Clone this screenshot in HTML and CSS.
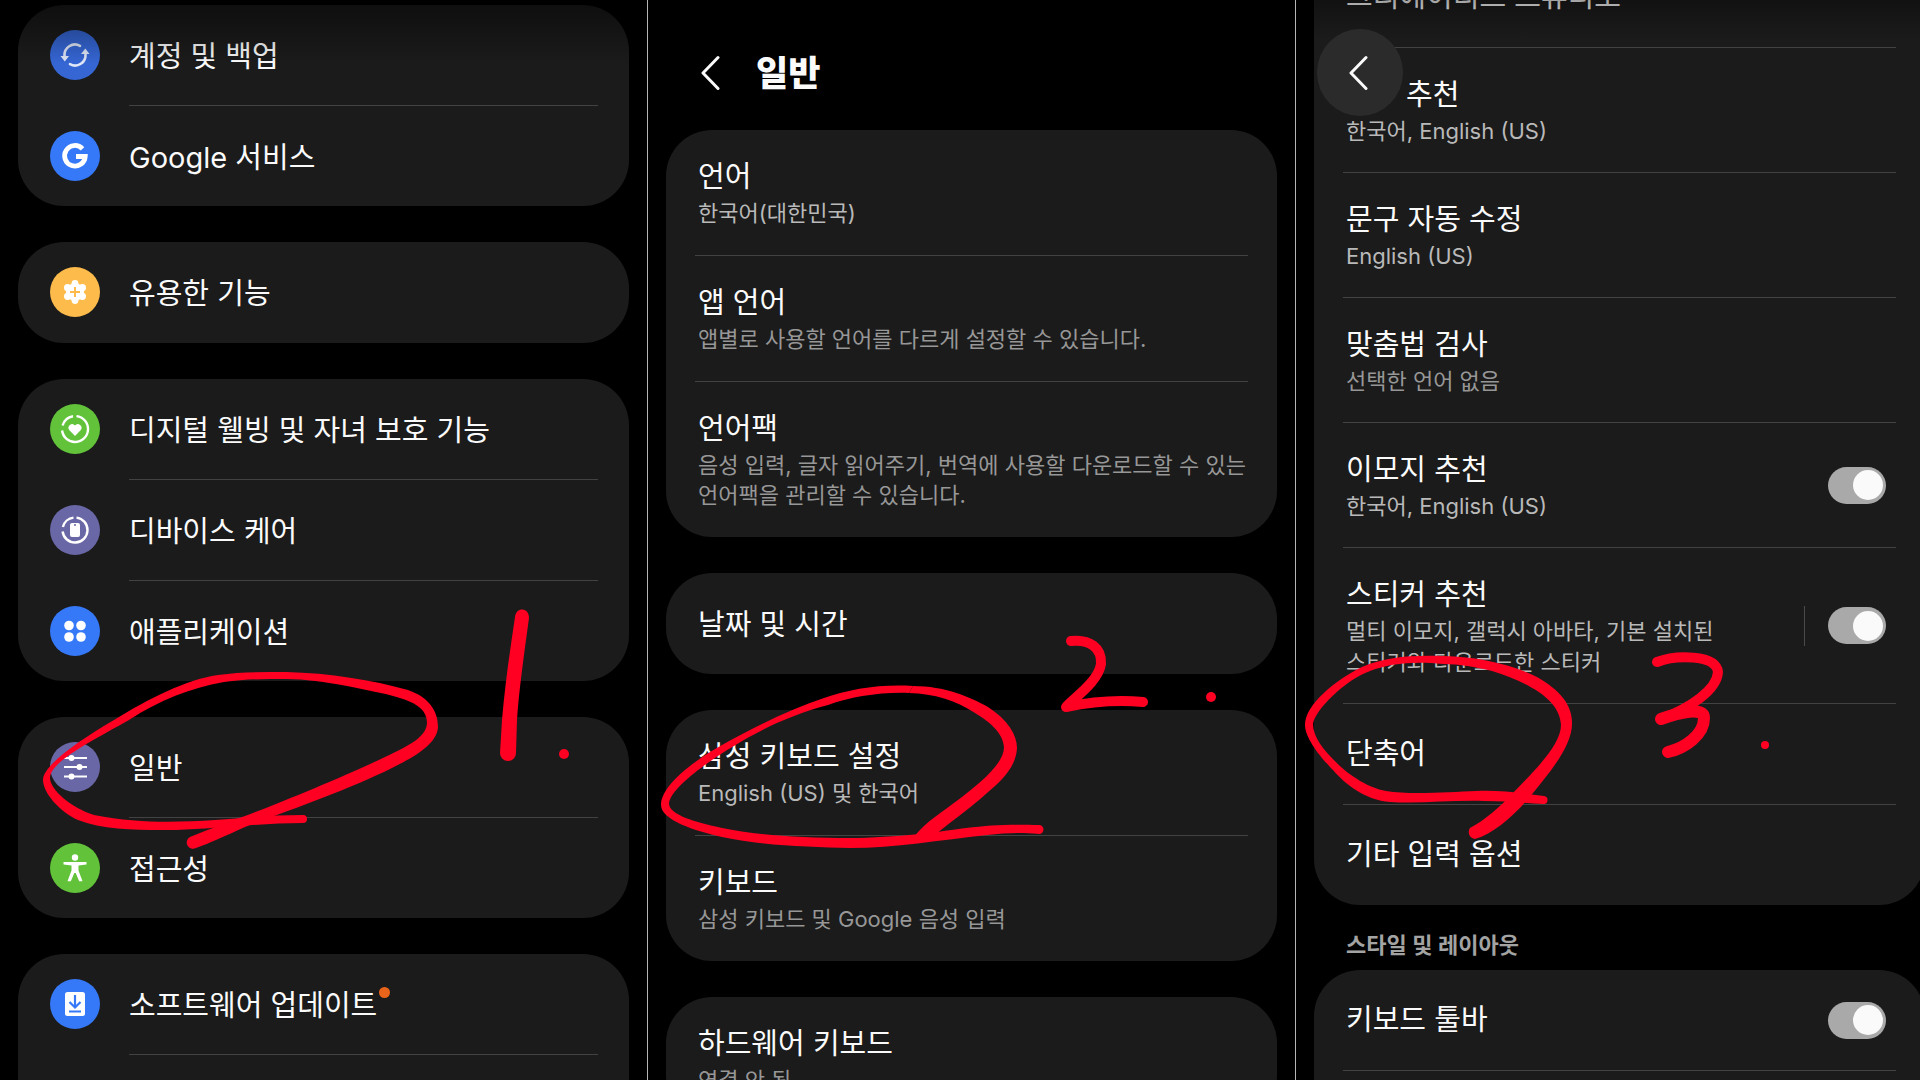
FILE: index.html
```html
<!DOCTYPE html>
<html lang="ko">
<head>
<meta charset="utf-8">
<meta name="viewport" content="width=device-width, initial-scale=1">
<title>단축어 설정 방법</title>
<link rel="stylesheet" href="styles.css">
</head>
<body>
<main class="guide">
  <section class="screen screen--menu" aria-label="설정">
    <ul class="card">
      <li class="item"><a class="row" href="#">
        <svg class="icon" viewBox="0 0 50 50" aria-hidden="true"><circle cx="25" cy="25" r="25" fill="#3566d4"/><g fill="none" stroke="#dfe7f8" stroke-width="2.6" stroke-linecap="round"><path d="M14.500 26A10.500 10.500 0 0 1 30 15.800"/><path d="M35.500 24A10.500 10.500 0 0 1 20 34.200"/></g><path d="M10.500 26h8.500l-4.200 5.500zM31 24h8.500l-4.200-5.500z" fill="#dfe7f8"/></svg>
        <span class="title">계정 및 백업</span></a></li>
      <li class="item"><a class="row" href="#">
        <svg class="icon" viewBox="0 0 50 50" aria-hidden="true"><circle cx="25" cy="25" r="25" fill="#3579f8"/><path d="M32.500 17.800A10.300 10.300 0 1 0 35.200 25.500H26" fill="none" stroke="#fff" stroke-width="4.800"/></svg>
        <span class="title">Google 서비스</span></a></li>
    </ul>
    <ul class="card">
      <li class="item"><a class="row" href="#">
        <svg class="icon" viewBox="0 0 50 50" aria-hidden="true"><circle cx="25" cy="25" r="25" fill="#fdbb4b"/><g fill="#fff"><circle cx="25" cy="25" r="9"/><circle cx="25" cy="16.500" r="3.400"/><circle cx="25" cy="33.500" r="3.400"/><circle cx="17.600" cy="20.700" r="3.600"/><circle cx="32.400" cy="20.700" r="3.600"/><circle cx="17.600" cy="29.300" r="3.600"/><circle cx="32.400" cy="29.300" r="3.600"/></g><path d="M25 20v10M20 25h10" stroke="#fdbb4b" stroke-width="2"/></svg>
        <span class="title">유용한 기능</span></a></li>
    </ul>
    <ul class="card">
      <li class="item"><a class="row" href="#">
        <svg class="icon" viewBox="0 0 50 50" aria-hidden="true"><circle cx="25" cy="25" r="25" fill="#62c33a"/><path d="M26.500 12.100A13 13 0 1 1 12.100 26.500M12.600 21.500A13 13 0 0 1 23 12.200" fill="none" stroke="#fff" stroke-width="2.400"/><path d="M25 32l-5.600-5.800a3.600 3.600 0 0 1 5.600-4.700a3.600 3.600 0 0 1 5.600 4.700z" fill="#fff"/></svg>
        <span class="title">디지털 웰빙 및 자녀 보호 기능</span></a></li>
      <li class="item"><a class="row" href="#">
        <svg class="icon" viewBox="0 0 50 50" aria-hidden="true"><circle cx="25" cy="25" r="25" fill="#6967a5"/><path d="M26.500 12.600A12.500 12.500 0 1 1 12.600 26.500M12.900 22A12.500 12.500 0 0 1 23.500 12.600" fill="none" stroke="#fff" stroke-width="2.400"/><rect x="20" y="18" width="10" height="14" rx="2" fill="#fff"/><circle cx="25" cy="20" r="1" fill="#6967a5"/></svg>
        <span class="title">디바이스 케어</span></a></li>
      <li class="item"><a class="row" href="#">
        <svg class="icon" viewBox="0 0 50 50" aria-hidden="true"><circle cx="25" cy="25" r="25" fill="#3579f8"/><g fill="#fff"><circle cx="19" cy="19.500" r="4.800"/><circle cx="31" cy="19.500" r="4.800"/><circle cx="19" cy="31" r="4.800"/><circle cx="31" cy="31" r="4.800"/></g></svg>
        <span class="title">애플리케이션</span></a></li>
    </ul>
    <ul class="card">
      <li class="item"><a class="row" href="#">
        <svg class="icon" viewBox="0 0 50 50" aria-hidden="true"><circle cx="25" cy="25" r="25" fill="#6967a5"/><path d="M14 16h23M14 25h23M14 34.500h23" stroke="#fff" stroke-width="2"/><g fill="#fff"><circle cx="21.500" cy="16" r="3"/><circle cx="29.500" cy="25" r="3"/><circle cx="21.500" cy="34.500" r="3"/></g></svg>
        <span class="title">일반</span></a></li>
      <li class="item"><a class="row" href="#">
        <svg class="icon" viewBox="0 0 50 50" aria-hidden="true"><circle cx="25" cy="25" r="25" fill="#62c33a"/><circle cx="25" cy="14.500" r="3.200" fill="#fff"/><path d="M13.500 19h23v2.500l-8 1v5l4 10.800h-3.300L25.700 30h-1.400l-3.500 8.300h-3.300l4-10.800v-5l-8-1z" fill="#fff"/></svg>
        <span class="title">접근성</span></a></li>
    </ul>
    <ul class="card">
      <li class="item"><a class="row" href="#">
        <svg class="icon" viewBox="0 0 50 50" aria-hidden="true"><circle cx="25" cy="25" r="25" fill="#3579f8"/><rect x="15" y="13" width="20" height="24" rx="2.500" fill="#fff"/><path d="M25 16v12M19.500 23l5.500 5.500 5.500-5.500M19 32.500h12" fill="none" stroke="#3579f8" stroke-width="2.200"/></svg>
        <span class="title title--new">소프트웨어 업데이트</span></a></li>
      <li class="item"><div class="row"></div></li>
    </ul>
  </section>

  <section class="screen screen--general" aria-label="일반">
    <header class="bar">
      <button class="back" type="button" aria-label="뒤로"><svg class="chevron" viewBox="0 0 20 36" aria-hidden="true"><path d="M18 2.500L3 18l15 15.500"/></svg></button>
      <h1 class="heading">일반</h1>
    </header>
    <ul class="card">
      <li class="item"><a class="row" href="#"><span class="text"><span class="title">언어</span><span class="sub sub--value">한국어(대한민국)</span></span></a></li>
      <li class="item"><a class="row" href="#"><span class="text"><span class="title">앱 언어</span><span class="sub">앱별로 사용할 언어를 다르게 설정할 수 있습니다.</span></span></a></li>
      <li class="item"><a class="row" href="#"><span class="text"><span class="title">언어팩</span><span class="sub">음성 입력, 글자 읽어주기, 번역에 사용할 다운로드할 수 있는 언어팩을 관리할 수 있습니다.</span></span></a></li>
    </ul>
    <ul class="card">
      <li class="item"><a class="row" href="#"><span class="title">날짜 및 시간</span></a></li>
    </ul>
    <ul class="card">
      <li class="item"><a class="row" href="#"><span class="text"><span class="title">삼성 키보드 설정</span><span class="sub sub--value">English (US) 및 한국어</span></span></a></li>
      <li class="item"><a class="row" href="#"><span class="text"><span class="title">키보드</span><span class="sub">삼성 키보드 및 Google 음성 입력</span></span></a></li>
    </ul>
    <ul class="card">
      <li class="item"><a class="row" href="#"><span class="text"><span class="title">하드웨어 키보드</span><span class="sub">연결 안 됨</span></span></a></li>
    </ul>
  </section>

  <section class="screen screen--keyboard" aria-label="삼성 키보드 설정">
    <button class="back back--float" type="button" aria-label="뒤로"><svg class="chevron" viewBox="0 0 20 36" aria-hidden="true"><path d="M18 2.500L3 18l15 15.500"/></svg></button>
    <ul class="card card--scrolled">
      <li class="item"><a class="row" href="#"><span class="title">크리에이티브 스튜디오</span></a></li>
      <li class="item"><a class="row" href="#"><span class="text"><span class="title title--beside">추천</span><span class="sub sub--value">한국어, English (US)</span></span></a></li>
      <li class="item"><a class="row" href="#"><span class="text"><span class="title">문구 자동 수정</span><span class="sub sub--value">English (US)</span></span></a></li>
      <li class="item"><a class="row" href="#"><span class="text"><span class="title">맞춤법 검사</span><span class="sub">선택한 언어 없음</span></span></a></li>
      <li class="item"><label class="row"><span class="text"><span class="title">이모지 추천</span><span class="sub sub--value">한국어, English (US)</span></span><input class="switch" type="checkbox" role="switch" checked></label></li>
      <li class="item"><label class="row"><span class="text"><span class="title">스티커 추천</span><span class="sub sub--value">멀티 이모지, 갤럭시 아바타, 기본 설치된 스티커와 다운로드한 스티커</span></span><span class="split"></span><input class="switch" type="checkbox" role="switch" checked></label></li>
      <li class="item"><a class="row" href="#"><span class="title">단축어</span></a></li>
      <li class="item"><a class="row" href="#"><span class="title">기타 입력 옵션</span></a></li>
    </ul>
    <h2 class="group">스타일 및 레이아웃</h2>
    <ul class="card">
      <li class="item"><label class="row"><span class="title">키보드 툴바</span><input class="switch" type="checkbox" role="switch" checked></label></li>
      <li class="item"><div class="row"></div></li>
    </ul>
  </section>

  <svg class="ink" viewBox="0 0 1920 1080" preserveAspectRatio="none" aria-hidden="true">
    <!-- step 1 -->
    <path d="M303 815C270 815 245 818 215 820C180 822 140 824 94 815C72 808 50 790 50 778C50 762 90 742 129 720C160 700 190 688 224 682C245 679 265 679 286 679L286 672C262 672 240 672 218 675C185 680 150 698 114 720C80 740 43 765 43 780C43 793 60 812 78 820C105 831 145 830 176 830C215 829 260 823 303 823A4 4 0 0 0 303 815Z"/>
    <path d="M286 672C330 673 372 680 408 690C428 697 438 710 438 727C437 745 412 758 392 768C350 789 290 810 245 827C225 836 210 843 196 848A6 6 0 0 1 190 837C210 829 230 821 245 816C285 801 345 776 385 757C415 743 427 735 427 722C426 700 395 696 347 686C325 682 305 679 286 679Z"/>
    <path d="M515 617C516 607 529 607 529 618C524 655 519 690 517 720L516 753A8 8 0 0 1 500 753L502 720C505 685 510 650 515 617Z"/>
    <circle cx="564" cy="754" r="5"/>
    <!-- step 2 -->
    <path d="M1039 825C1010 824 990 825 966 828C945 831 895 838 850 838C800 838 755 835 722 828C695 822 670 815 669 804C669 790 705 763 734 746C758 731 790 715 828 705C850 697 880 692 909 693L913 686C880 684 850 689 824 698C790 709 755 727 722 745C695 760 661 785 661 805C661 820 695 831 722 837C765 846 810 847 850 848C895 848 940 840 987 835C1005 833 1020 832 1039 834A4 4 0 0 0 1039 825Z"/>
    <path d="M913 686C945 686 970 697 988 707C1008 720 1017 735 1017 748C1016 768 1000 782 987 793C968 810 950 822 934 836L914 837C925 822 945 810 958 800C980 783 1004 764 1004 747C1003 733 990 722 975 713C955 700 935 694 909 693Z"/>
    <path class="pen" d="M1071 641C1090 639 1102 648 1101 664C1098 682 1075 697 1066 707C1090 702 1120 700 1143 702"/>
    <circle cx="1211" cy="697" r="5"/>
    <!-- step 3 -->
    <path d="M1544 796C1520 793 1500 790 1476 791C1450 792 1410 795 1386 791C1368 788 1350 775 1341 767C1325 752 1313 738 1313 724C1315 710 1345 680 1370 671C1390 663 1415 661 1443 664L1443 656C1410 655 1385 657 1362 667C1335 680 1305 705 1305 725C1305 740 1325 762 1333 770C1345 784 1365 800 1390 802C1420 804 1450 800 1484 801C1505 801 1525 803 1543 804A4 4 0 0 0 1544 796Z"/>
    <path d="M1443 656C1480 657 1510 664 1537 677C1560 690 1572 705 1572 722C1573 745 1550 772 1533 793C1515 815 1495 833 1475 839A7 7 0 0 1 1470 828C1485 820 1500 807 1513 793C1535 770 1561 745 1561 725C1560 700 1530 683 1492 671C1475 667 1460 664 1443 664Z"/>
    <path class="pen" d="M1657 662C1675 655 1716 654 1718 672C1717 690 1690 708 1661 719"/>
    <path class="pen pen--wide" d="M1661 719C1678 713 1704 706 1704 718C1704 735 1685 748 1668 752"/>
    <circle cx="1765" cy="745" r="4"/>
  </svg>
</main>
</body>
</html>
```
FILE: styles.css
```css
* {
  box-sizing: border-box;
}

body {
  margin: 0;
  background: #000;
  color: #fafafa;
  font-family: "Inter", "Noto Sans CJK KR", sans-serif;
  word-break: keep-all;
}

.guide {
  position: relative;
  display: grid;
  grid-template-columns: 648fr 648fr 624fr;
  height: 100vh;
  overflow: hidden;
}

.screen {
  position: relative;
  display: flex;
  flex-direction: column;
  gap: 36px;
  min-width: 0;
  min-height: 0;
  padding: 0 18px;
  border-right: 1px solid #b4b4b4;
  overflow: hidden;
}

.screen--menu {
  padding-top: 5px;
}

.screen--keyboard {
  gap: 0;
  padding-right: 0;
  border-right: 0;
}

/* status bar fade over scrolled content */
.screen--menu::after,
.screen--keyboard::after {
  content: "";
  position: absolute;
  inset: 0 0 auto;
  height: 64px;
  background: linear-gradient(rgb(0 0 0 / 50%), rgb(0 0 0 / 0%));
  pointer-events: none;
}

.screen--keyboard::after {
  height: 40px;
  background: linear-gradient(rgb(0 0 0 / 35%), rgb(0 0 0 / 0%));
}

.card {
  flex: none;
  min-height: 101px;
  margin: 0;
  padding: 0;
  border-radius: 46px;
  background: #1b1b1b;
  list-style: none;
}

.screen--keyboard .card {
  margin-right: -5px;
}

.screen--keyboard .card--scrolled {
  margin-top: -53px;
}

.item {
  padding: 0 29px;
}

/* rows with an icon start their divider at the label */
.screen--menu .item {
  padding: 0 31px 0 111px;
}

.row {
  display: flex;
  align-items: center;
  min-height: 100px;
  padding-left: 3px;
  color: inherit;
  text-decoration: none;
}

.screen--menu .row {
  padding-left: 0;
}

.item + .item .row {
  min-height: 101px;
  border-top: 1px solid #424242;
}

.icon {
  flex: none;
  width: 50px;
  height: 50px;
  margin: 0 29px 0 -79px;
}

.text {
  flex: 1;
  display: flex;
  flex-direction: column;
  min-width: 0;
  padding: 26px 0 27px;
}

.screen--keyboard .text {
  padding-bottom: 25px;
}

.title {
  font-size: 29px;
  line-height: 42px;
}

.screen--menu .title,
.screen--general .row > .title {
  padding-top: 3px;
}

/* label that sits to the right of the floating back button */
.title--beside {
  padding-left: 60px;
}

.sub {
  color: #979797;
  font-size: 22px;
  line-height: 30px;
}

.screen--keyboard .sub {
  line-height: 31px;
}

.sub--value {
  color: #b9b9b9;
}

.title--new {
  position: relative;
}

.title--new::after {
  content: "";
  position: absolute;
  top: 5px;
  right: -13px;
  width: 11px;
  height: 11px;
  border-radius: 50%;
  background: #e8641b;
}

.bar {
  display: flex;
  align-items: center;
  gap: 36px;
  height: 94px;
  padding: 52px 0 0 34px;
}

.heading {
  margin: 0;
  font-size: 35px;
  font-weight: 800;
  line-height: 42px;
}

.back {
  display: flex;
  align-items: center;
  justify-content: center;
  padding: 0;
  border: 0;
  background: none;
}

.back--float {
  position: absolute;
  z-index: 1;
  top: 29px;
  left: 21px;
  width: 86px;
  height: 87px;
  padding-right: 4px;
  border-radius: 50%;
  background: #2b2b2b;
}

.chevron {
  width: 20px;
  height: 36px;
  fill: none;
  stroke: #fafafa;
  stroke-width: 3;
  stroke-linecap: round;
  stroke-linejoin: round;
}

.group {
  margin: 0;
  padding: 25px 32px 10px;
  color: #a3a3a3;
  font-size: 22px;
  font-weight: 600;
  line-height: 30px;
}

.switch {
  appearance: none;
  display: flex;
  flex: none;
  align-items: center;
  justify-content: flex-end;
  width: 58px;
  height: 37px;
  margin: 0 10px 0 auto;
  padding: 3px;
  border-radius: 19px;
  background: #a9a9a9;
}

.switch::before {
  content: "";
  width: 30px;
  height: 30px;
  border-radius: 50%;
  background: #fafafa;
}

.split {
  width: 1px;
  height: 40px;
  margin: 0 23px 0 30px;
  background: #4a4a4a;
}

.ink {
  position: absolute;
  inset: 0;
  width: 100%;
  height: 100%;
  fill: #ff0022;
  pointer-events: none;
}

.pen {
  fill: none;
  stroke: #ff0022;
  stroke-width: 10;
  stroke-linecap: round;
  stroke-linejoin: round;
}

.pen--wide {
  stroke-width: 12;
}
```
